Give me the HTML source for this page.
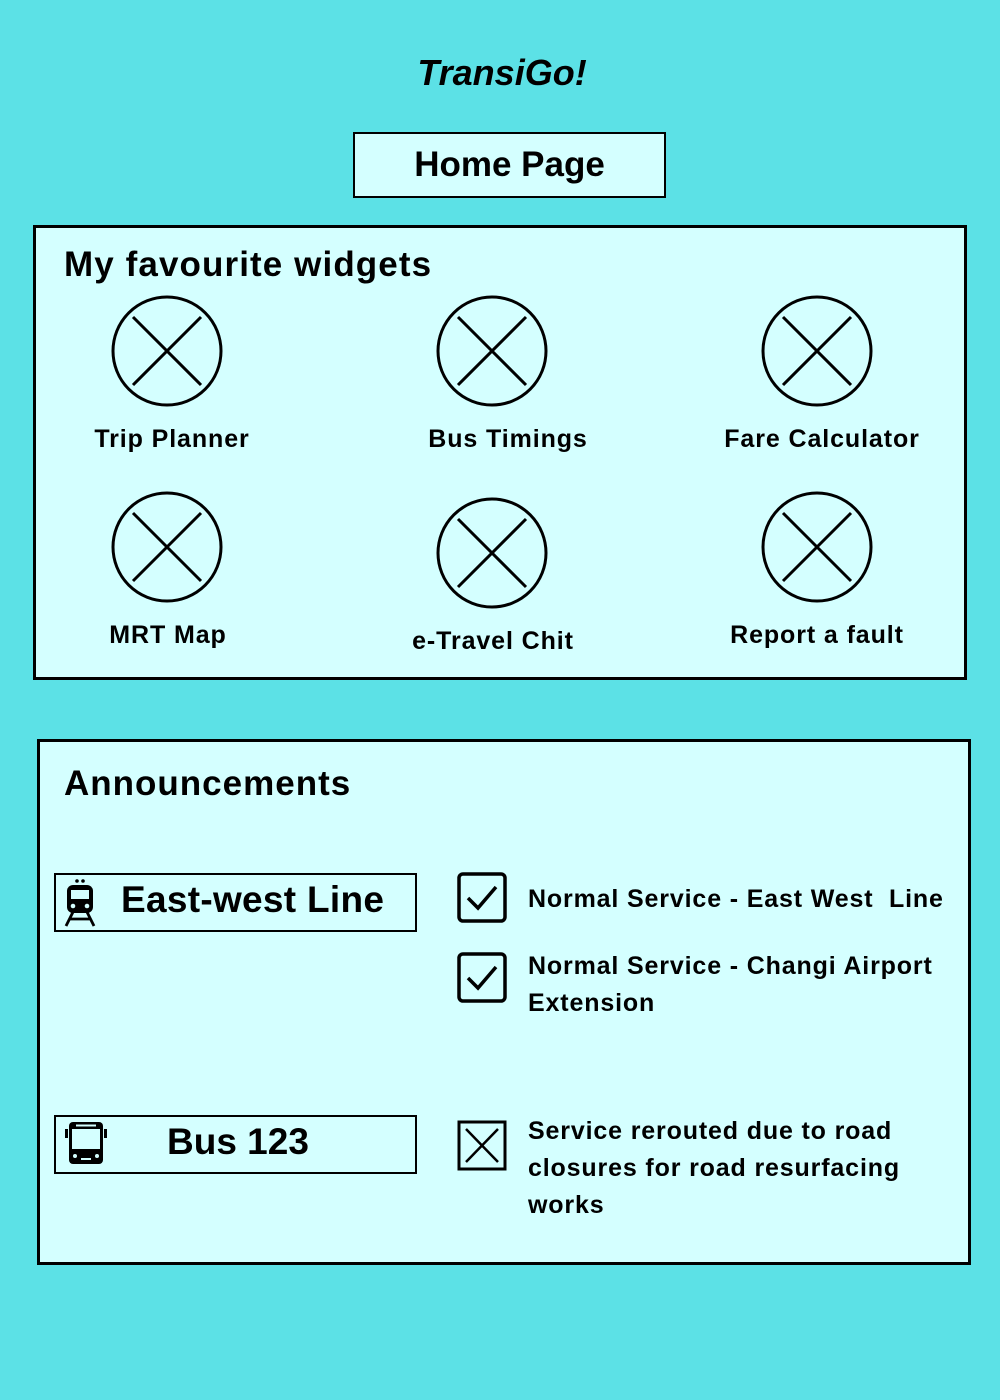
<!DOCTYPE html>
<html><head><style>
body{margin:0;width:1000px;height:1400px;background:#5ce1e6;position:relative;font-family:"Liberation Sans",sans-serif;font-weight:bold;color:#000;overflow:hidden}
.a{position:absolute;white-space:nowrap}
.box{position:absolute;background:#d4ffff;border:3px solid #000;box-sizing:border-box}
.lbl{position:absolute;font-size:25px;text-align:center;width:260px;letter-spacing:0.9px}
.ann{position:absolute;font-size:25px;line-height:37px;letter-spacing:0.85px}
</style></head><body>
<div class="a" style="width:1000px;text-align:center;top:52px;font-size:36px;font-style:italic;left:2px">TransiGo!</div>
<div class="box" style="left:353px;top:132px;width:313px;height:66px;border-width:2px;text-align:center;font-size:35px;line-height:62px">Home Page</div>

<div class="box" style="left:33px;top:225px;width:934px;height:455px"></div>
<div class="a" style="left:64px;top:245px;font-size:35px;letter-spacing:1.1px">My favourite widgets</div>
<svg class="a" style="left:0;top:0" width="1000" height="700">
<g fill="none" stroke="#000" stroke-width="3">
<circle cx="167" cy="351" r="54"/><path d="M133 317L201 385M201 317L133 385"/>
<circle cx="492" cy="351" r="54"/><path d="M458 317L526 385M526 317L458 385"/>
<circle cx="817" cy="351" r="54"/><path d="M783 317L851 385M851 317L783 385"/>
<circle cx="167" cy="547" r="54"/><path d="M133 513L201 581M201 513L133 581"/>
<circle cx="492" cy="553" r="54"/><path d="M458 519L526 587M526 519L458 587"/>
<circle cx="817" cy="547" r="54"/><path d="M783 513L851 581M851 513L783 581"/>
</g></svg>
<div class="lbl" style="left:42px;top:425px">Trip Planner</div>
<div class="lbl" style="left:378px;top:425px">Bus Timings</div>
<div class="lbl" style="left:692px;top:425px">Fare Calculator</div>
<div class="lbl" style="left:38px;top:621px">MRT Map</div>
<div class="lbl" style="left:363px;top:627px">e-Travel Chit</div>
<div class="lbl" style="left:687px;top:621px">Report a fault</div>

<div class="box" style="left:37px;top:739px;width:934px;height:526px"></div>
<div class="a" style="left:64px;top:764px;font-size:35px;letter-spacing:1px">Announcements</div>

<div class="box" style="left:54px;top:873px;width:363px;height:59px;border-width:2px"></div>
<div class="a" style="left:121px;top:879px;font-size:37px;letter-spacing:0.3px">East-west Line</div>
<svg class="a" style="left:64px;top:878px" width="36" height="50">
<circle cx="13" cy="3" r="1.8"/><circle cx="19" cy="3" r="1.8"/>
<rect x="3" y="7" width="26" height="28" rx="6"/>
<rect x="7" y="12" width="18" height="9" fill="#d4ffff"/>
<circle cx="9" cy="28" r="2.3" fill="#d4ffff"/><circle cx="23" cy="28" r="2.3" fill="#d4ffff"/>
<path d="M9 34L2 48M23 34L30 48M6 41H26" stroke="#000" stroke-width="2.8"/>
</svg>

<div class="box" style="left:54px;top:1115px;width:363px;height:59px;border-width:2px"></div>
<div class="a" style="left:167px;top:1121px;font-size:37px">Bus 123</div>
<svg class="a" style="left:64px;top:1120px" width="46" height="46">
<rect x="5" y="2" width="34" height="42" rx="4"/>
<rect x="8" y="9" width="28" height="20" fill="#d4ffff"/>
<rect x="12" y="4.5" width="20" height="2" fill="#d4ffff"/>
<rect x="1" y="9" width="3" height="9"/><rect x="40" y="9" width="3" height="9"/>
<circle cx="11" cy="36" r="2" fill="#d4ffff"/><circle cx="33" cy="36" r="2" fill="#d4ffff"/>
<rect x="17" y="38" width="10" height="2" fill="#d4ffff"/>
</svg>

<svg class="a" style="left:455px;top:870px" width="60" height="310">
<g fill="none" stroke="#000" stroke-width="3.5">
<rect x="4" y="4" width="46" height="47" rx="4"/><path d="M13 28L23 38L41 17"/>
<rect x="4" y="84" width="46" height="47" rx="4"/><path d="M13 108L23 118L41 97"/>
<rect x="4" y="252" width="46" height="47" stroke-width="3"/><path d="M11 259L43 292M43 259L11 292" stroke-width="2.5"/>
</g></svg>
<div class="ann" style="left:528px;top:881px">Normal Service - East West&nbsp; Line</div>
<div class="ann" style="left:528px;top:948px">Normal Service - Changi Airport<br>Extension</div>
<div class="ann" style="left:528px;top:1113px">Service rerouted due to road<br>closures for road resurfacing<br>works</div>
</body></html>
